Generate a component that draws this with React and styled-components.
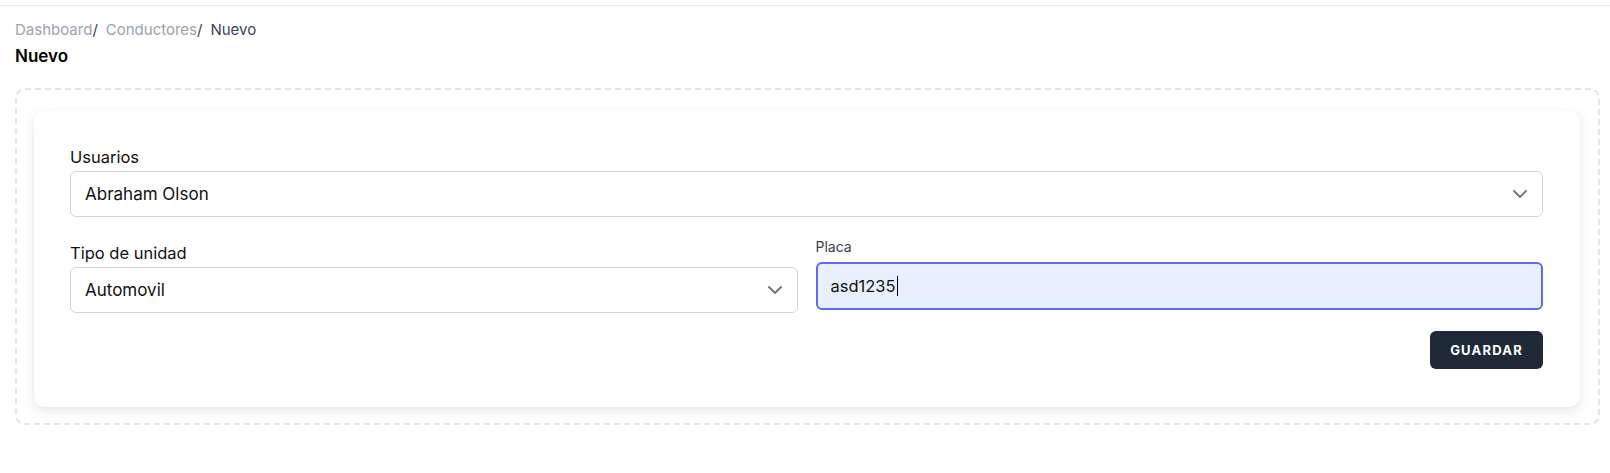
import React from "react";
import styled, { createGlobalStyle } from "styled-components";

const Global = createGlobalStyle`
  html, body { margin: 0; padding: 0; background: #ffffff; }
  body { font-family: Inter, "Noto Sans", sans-serif; color: #111827; }
  * { box-sizing: border-box; }
`;

const TopBar = styled.div`
  height: 6px;
  border-bottom: 1px solid #e5e7eb;
`;

const Page = styled.main`
  padding: 14px 10px 40px 15px;
`;

const Crumbs = styled.nav`
  display: flex;
  align-items: center;
  gap: 8px;
  font-size: 15px;
  line-height: 20px;
`;

const Crumb = styled.span`
  color: ${(p) => (p.$current ? "#3b4256" : "#9ca3af")};
`;

const Slash = styled.span`
  color: #374151;
`;

const Title = styled.h1`
  margin: 4px 0 0;
  font-size: 17px;
  line-height: 24px;
  font-weight: 600;
  color: #000;
`;

const Dashed = styled.section`
  margin-top: 20px;
  border: 2px dashed #e3e4ea;
  border-radius: 10px;
  padding: 21px 18px 16px 17px;
`;

const Card = styled.div`
  background: #fff;
  border-radius: 10px;
  box-shadow: 0 4px 14px rgba(0, 0, 0, 0.09), 0 1px 3px rgba(0, 0, 0, 0.04);
  padding: 34px 37px 38px 36px;
  display: flex;
  flex-direction: column;
`;

const Field = styled.div`
  display: flex;
  flex-direction: column;
  padding-top: ${(p) => p.$offset || 0}px;
`;

const Label = styled.label`
  font-size: 16.5px;
  line-height: 24px;
  color: #111;
  margin-bottom: 2px;
`;

const SmallLabel = styled.label`
  font-size: 14px;
  line-height: 20px;
  color: #374151;
  margin-bottom: 5px;
`;

const SelectBox = styled.div`
  height: 46px;
  border: 1px solid #d1d5db;
  border-radius: 6px;
  background: #fff;
  display: flex;
  align-items: center;
  justify-content: space-between;
  padding: 0 15px 0 14px;
  font-size: 17px;
  color: #111;
`;

const Input = styled.div`
  height: 48px;
  border: 2px solid #6366f1;
  border-radius: 6px;
  background: #e8f0fe;
  display: flex;
  align-items: center;
  padding: 0 13px;
  font-size: 16.5px;
  color: #111;
`;

const Caret = styled.span`
  display: inline-block;
  width: 1px;
  height: 20px;
  background: #000;
  margin-left: 1px;
`;

const Row = styled.div`
  display: grid;
  grid-template-columns: 1fr 1fr;
  gap: 18px;
  margin-top: 20px;
  align-items: start;
`;

const Actions = styled.div`
  display: flex;
  justify-content: flex-end;
  margin-top: 18px;
`;

const Button = styled.button`
  height: 38px;
  width: 113px;
  border: none;
  border-radius: 6px;
  background: #1f2937;
  color: #fff;
  font-family: Inter, sans-serif;
  font-weight: 700;
  font-size: 13px;
  letter-spacing: 1.2px;
  text-transform: uppercase;
`;

const Chevron = () => (
  <svg width="14" height="8" viewBox="0 0 14 8" fill="none">
    <path d="M1 1l6 6 6-6" stroke="#6b7280" strokeWidth="1.8" strokeLinecap="round" strokeLinejoin="round" />
  </svg>
);

export default function App() {
  return (
    <>
      <Global />
      <TopBar />
      <Page>
        <Crumbs>
          <span>
            <Crumb>Dashboard</Crumb>
            <Slash>/</Slash>
          </span>
          <span>
            <Crumb>Conductores</Crumb>
            <Slash>/</Slash>
          </span>
          <Crumb $current>Nuevo</Crumb>
        </Crumbs>
        <Title>Nuevo</Title>
        <Dashed>
          <Card>
            <Field>
              <Label>Usuarios</Label>
              <SelectBox>
                <span>Abraham Olson</span>
                <Chevron />
              </SelectBox>
            </Field>
            <Row>
              <Field $offset={4}>
                <Label>Tipo de unidad</Label>
                <SelectBox>
                  <span>Automovil</span>
                  <Chevron />
                </SelectBox>
              </Field>
              <Field>
                <SmallLabel>Placa</SmallLabel>
                <Input>
                  asd1235
                  <Caret />
                </Input>
              </Field>
            </Row>
            <Actions>
              <Button>Guardar</Button>
            </Actions>
          </Card>
        </Dashed>
      </Page>
    </>
  );
}
